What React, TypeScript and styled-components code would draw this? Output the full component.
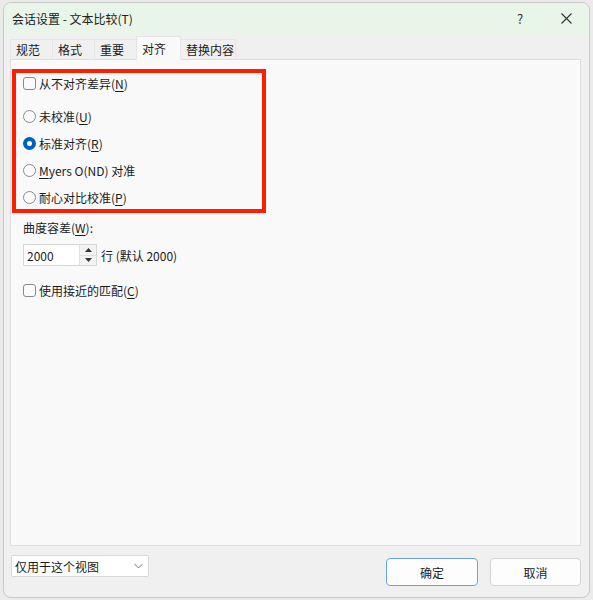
import React from "react";
import styled, { createGlobalStyle } from "styled-components";

const Global = createGlobalStyle`
  html, body { margin: 0; padding: 0; }
  body {
    background: #ebebeb;
    font-family: "Microsoft YaHei UI", "Noto Sans CJK SC", "Noto Sans", sans-serif;
    font-size: 12px;
    color: #1b1b1b;
  }
`;

const Screen = styled.div`
  width: 593px;
  height: 600px;
  padding: 2px 3px 2px 3px;
  box-sizing: border-box;
`;

const Window = styled.div`
  width: 587px;
  height: 596px;
  box-sizing: border-box;
  border: 1px solid #c9c9c9;
  border-radius: 8px;
  background: #f0f0f0;
  overflow: hidden;
  display: flex;
  flex-direction: column;
`;

const TitleBar = styled.div`
  height: 30px;
  flex: none;
  display: flex;
  align-items: center;
  background: #e9f5e9;
  padding-left: 8px;
`;

const Title = styled.div`
  flex: 1;
  font-size: 12px;
  color: #222;
`;

const TitleButton = styled.div`
  width: 46px;
  height: 30px;
  display: flex;
  align-items: center;
  justify-content: center;
  color: #333;
  font-size: 13px;
`;

const Body = styled.div`
  flex: 1;
  display: flex;
  flex-direction: column;
  padding: 2px 8px 0 6px;
`;

const TabRow = styled.div`
  display: flex;
  align-items: flex-end;
  height: 24px;
  position: relative;
  z-index: 1;
`;

const Tab = styled.div<{ $active?: boolean }>`
  height: ${(p) => (p.$active ? "24px" : "20px")};
  min-width: ${(p) => (p.$active ? "45px" : "43px")};
  box-sizing: border-box;
  padding: 0 1px 0 5px;
  display: flex;
  align-items: center;
  font-size: 12px;
  color: #1b1b1b;
  background: ${(p) => (p.$active ? "#f9f9f9" : "#f0f0f0")};
  border: 1px solid ${(p) => (p.$active ? "#e3e3e3" : "#e6e6e6")};
  border-bottom: ${(p) => (p.$active ? "1px solid #f9f9f9" : "none")};
  margin-bottom: ${(p) => (p.$active ? "-1px" : "0")};
  margin-left: -1px;
  &:first-child { margin-left: 0; }
`;

const Panel = styled.div`
  flex: 1;
  background: #f9f9f9;
  border: 1px solid #dedede;
  padding: 9px 1px 0 1px;
`;

const Highlight = styled.div`
  width: 254px;
  box-sizing: border-box;
  border: 4px solid #ff1f00;
  padding: 0 0 2px 7px;
  display: flex;
  flex-direction: column;
`;

const OptionRow = styled.label<{ $gap?: number }>`
  height: 20px;
  display: flex;
  align-items: center;
  gap: 3px;
  margin-top: ${(p) => p.$gap ?? 0}px;
  font-size: 12px;
`;

const Check = styled.span`
  width: 11px;
  height: 11px;
  border: 1px solid #8a8a8a;
  border-radius: 3px;
  background: #fbfbfb;
  flex: none;
`;

const Radio = styled.span<{ $on?: boolean }>`
  width: ${(p) => (p.$on ? "13px" : "11px")};
  height: ${(p) => (p.$on ? "13px" : "11px")};
  border-radius: 50%;
  flex: none;
  box-sizing: content-box;
  border: ${(p) => (p.$on ? "none" : "1px solid #8a8a8a")};
  background: ${(p) => (p.$on ? "#005fb8" : "#fbfbfb")};
  display: flex;
  align-items: center;
  justify-content: center;
  &::after {
    content: "";
    display: ${(p) => (p.$on ? "block" : "none")};
    width: 5px;
    height: 5px;
    border-radius: 50%;
    background: #fff;
  }
`;

const U = styled.span`
  text-decoration: underline;
  text-underline-offset: 2px;
`;

const Section = styled.div`
  padding-left: 11px;
  display: flex;
  flex-direction: column;
`;

const FieldLabel = styled.div`
  margin-top: 7px;
  height: 16px;
  line-height: 16px;
`;

const SpinLine = styled.div`
  margin-top: 8px;
  display: flex;
  align-items: center;
  gap: 4px;
`;

const Spin = styled.div`
  display: flex;
  height: 22px;
  width: 74px;
  box-sizing: border-box;
  border: 1px solid #d6d6d6;
  background: #fff;
`;

const SpinInput = styled.div`
  flex: 1;
  display: flex;
  align-items: center;
  padding-left: 3px;
  font-size: 12px;
`;

const SpinButtons = styled.div`
  width: 16px;
  display: flex;
  flex-direction: column;
  border-left: 1px solid #e0e0e0;
  background: #f3f3f3;
`;

const SpinBtn = styled.div`
  flex: 1;
  display: flex;
  align-items: center;
  justify-content: center;
  & + & { border-top: 1px solid #e0e0e0; }
`;

const Footer = styled.div`
  height: 51px;
  flex: none;
  display: flex;
  align-items: flex-start;
  padding: 9px 0 0 1px;
  box-sizing: border-box;
`;

const Select = styled.div`
  width: 138px;
  height: 22px;
  box-sizing: border-box;
  border: 1px solid #d9d9d9;
  border-radius: 2px;
  background: #fff;
  display: flex;
  align-items: center;
  justify-content: space-between;
  padding: 0 5px 0 3px;
  font-size: 12px;
`;

const Buttons = styled.div`
  margin-left: auto;
  margin-top: 3px;
  display: flex;
  gap: 12px;
`;

const Button = styled.div<{ $primary?: boolean }>`
  width: ${(p) => (p.$primary ? "92px" : "91px")};
  height: 28px;
  box-sizing: border-box;
  border-radius: 4px;
  border: 1px solid ${(p) => (p.$primary ? "#6aa4e0" : "#d4d4d4")};
  background: #fdfdfd;
  display: flex;
  align-items: center;
  justify-content: center;
  font-size: 12px;
`;

const Tri = ({ up }: { up?: boolean }) => (
  <svg width="7" height="4" viewBox="0 0 7 4">
    <path d={up ? "M0 4 L3.5 0 L7 4 Z" : "M0 0 L3.5 4 L7 0 Z"} fill="#333" />
  </svg>
);

export default function App() {
  return (
    <Screen>
      <Global />
      <Window>
        <TitleBar>
          <Title>会话设置 - 文本比较(T)</Title>
          <TitleButton>?</TitleButton>
          <TitleButton>
            <svg width="11" height="11" viewBox="0 0 11 11">
              <path d="M0.5 0.5 L10.5 10.5 M10.5 0.5 L0.5 10.5" stroke="#333" strokeWidth="1.1" />
            </svg>
          </TitleButton>
        </TitleBar>
        <Body>
          <TabRow>
            <Tab>规范</Tab>
            <Tab>格式</Tab>
            <Tab>重要</Tab>
            <Tab $active>对齐</Tab>
            <Tab>替换内容</Tab>
          </TabRow>
          <Panel>
            <Highlight>
              <OptionRow>
                <Check /><span>从不对齐差异(<U>N</U>)</span>
              </OptionRow>
              <OptionRow $gap={13}>
                <Radio /><span>未校准(<U>U</U>)</span>
              </OptionRow>
              <OptionRow $gap={7}>
                <Radio $on /><span>标准对齐(<U>R</U>)</span>
              </OptionRow>
              <OptionRow $gap={7}>
                <Radio /><span><U>M</U>yers O(ND) 对准</span>
              </OptionRow>
              <OptionRow $gap={7}>
                <Radio /><span>耐心对比校准(<U>P</U>)</span>
              </OptionRow>
            </Highlight>
            <Section>
              <FieldLabel>曲度容差(<U>W</U>):</FieldLabel>
              <SpinLine>
                <Spin>
                  <SpinInput>2000</SpinInput>
                  <SpinButtons>
                    <SpinBtn><Tri up /></SpinBtn>
                    <SpinBtn><Tri /></SpinBtn>
                  </SpinButtons>
                </Spin>
                <span>行 (默认 2000)</span>
              </SpinLine>
              <OptionRow $gap={14}>
                <Check /><span>使用接近的匹配(<U>C</U>)</span>
              </OptionRow>
            </Section>
          </Panel>
          <Footer>
            <Select>
              <span>仅用于这个视图</span>
              <svg width="9" height="6" viewBox="0 0 9 6">
                <path d="M0.5 1 L4.5 5 L8.5 1" fill="none" stroke="#777" strokeWidth="1" />
              </svg>
            </Select>
            <Buttons>
              <Button $primary>确定</Button>
              <Button>取消</Button>
            </Buttons>
          </Footer>
        </Body>
      </Window>
    </Screen>
  );
}
